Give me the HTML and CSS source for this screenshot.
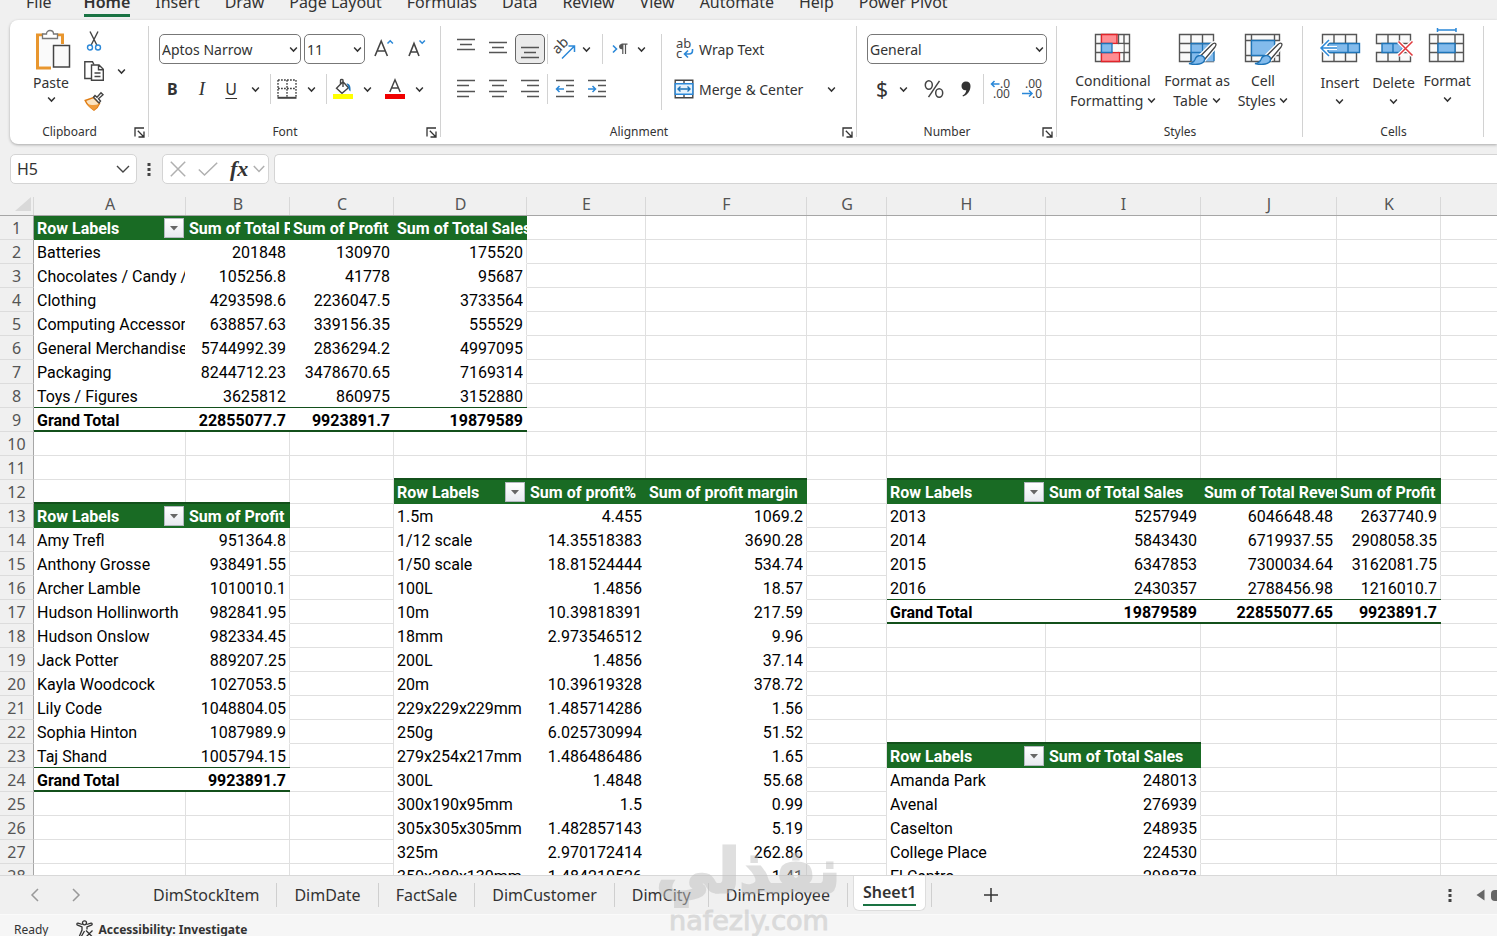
FILE: index.html
```html
<!DOCTYPE html>
<html lang="en">
<head>
    <meta charset="UTF-8">
    <meta name="viewport" content="width=device-width, initial-scale=1.0">
    <title>Workbook - Sheet1</title>
    <link rel="stylesheet" href="styles.css">
</head>
<body>
    <!-- Shared icons -->
    <svg class="icon-defs" aria-hidden="true">
        <symbol id="chevron" viewBox="0 0 8 6"><path d="M1 1.2 4 4.4 7 1.2" fill="none" stroke="currentColor" stroke-width="1.3"/></symbol>
        <symbol id="launcher" viewBox="0 0 11 11"><path d="M1 9.5V1h9M3.8 3.8l5.4 5.4M10 4.5V10H4.5" fill="none" stroke="currentColor" stroke-width="1.3"/></symbol>
        <symbol id="brush" viewBox="0 0 40 36">
            <path d="M38.500 13.500c1 1 .5 2-.5 3.500L28 29l-4-3.500L35 14.500c1.500-1.500 2.500-2 3.500-1z" fill="#fff" stroke="#fff" stroke-width="4"/>
            <path d="M38.500 13.500c1 1 .5 2-.5 3.500L28 29l-4-3.500L35 14.500c1.500-1.500 2.500-2 3.500-1z" fill="#fff" stroke="#444" stroke-width="1.300"/>
            <path d="M23.500 25.500c2.500 0 4.500 2 4 4.500-.8 4-8 5.500-15.500 3.500 3.500-.5 5-1.500 6-4 .8-2.500 2.500-4 5.500-4z" fill="#83bbec" stroke="#1e74b8" stroke-width="1.300"/>
        </symbol>
    </svg>

    <nav class="menu">
        <button>File</button>
        <button class="active">Home</button>
        <button>Insert</button>
        <button>Draw</button>
        <button>Page Layout</button>
        <button>Formulas</button>
        <button>Data</button>
        <button>Review</button>
        <button>View</button>
        <button>Automate</button>
        <button>Help</button>
        <button>Power Pivot</button>
    </nav>

    <div class="ribbon">
        <section class="group group-clipboard">
            <div class="group-body">
                <button class="big-btn split-btn">
                    <svg width="40" height="40" viewBox="0 0 40 40" fill="none">
                        <path d="M12.500 5H6.500v33H20M26 5h5.500v9" stroke="#e8962e" stroke-width="3"/>
                        <path d="M8 6.500h22V14H21v22H8z" fill="#fafafa"/>
                        <path d="M11.500 8.500V4h4c0-2 1.500-3.500 3.500-3.500s3.500 1.500 3.500 3.500h4v4.500z" fill="#fff" stroke="#777" stroke-width="1.300"/>
                        <path d="M22.500 15.500h16V37h-16z" fill="#fafafa" stroke="#444" stroke-width="1.500"/>
                    </svg>
                    <span>Paste</span>
                    <svg class="chev"><use href="#chevron"/></svg>
                </button>
                <div class="clip-list">
                    <div class="row">
                        <button class="btn" aria-label="Cut">
                            <svg width="16" height="20" viewBox="0 0 16 20" fill="none">
                                <path d="M4 .5 10.800 14M12 .5 5.200 14" stroke="#444" stroke-width="1.400"/>
                                <circle cx="4" cy="16.500" r="2.500" stroke="#2b88d8" stroke-width="1.400"/>
                                <circle cx="12" cy="16.500" r="2.500" stroke="#2b88d8" stroke-width="1.400"/>
                            </svg>
                        </button>
                    </div>
                    <div class="row">
                        <button class="btn" aria-label="Copy">
                            <svg width="20" height="20" viewBox="0 0 20 20" fill="none" stroke="#444" stroke-width="1.400">
                                <path d="M7 17.500H.8V.8h7.700L10 3.500"/>
                                <path d="M7.500 4h7.500l4.300 4.300v11H7.500zM14.500 4.300v4.400H19M10.500 12h6M10.500 15.500h6"/>
                            </svg>
                        </button>
                        <button class="caret" aria-label="Copy options"><svg class="chev"><use href="#chevron"/></svg></button>
                    </div>
                    <div class="row">
                        <button class="btn" aria-label="Format Painter">
                            <svg width="20" height="20" viewBox="0 0 20 20">
                                <path d="M1.200 9.500 9.500 6.500l6 6c-1 2.500-3 5-5.500 6.500C6 16.500 3 13.500 1.200 9.500z" fill="#fbe3c0" stroke="#e07d14" stroke-width="1.500"/>
                                <path d="M3 12.500c4 2 8 2 12 .5-1.500 3-3 4.500-5 6-3-1.500-5.500-4-7-6.500z" fill="#f09a38"/>
                                <path d="M9.500 6.300 11 4.500l2 1.800 4-4.500 2 2-4.500 4L16.500 10l-1.500 2z" fill="#fff" stroke="#444" stroke-width="1.400"/>
                            </svg>
                        </button>
                    </div>
                </div>
            </div>
            <div class="group-label"><span>Clipboard</span><button class="launch" aria-label="Clipboard settings"><svg><use href="#launcher"/></svg></button></div>
        </section>

        <section class="group group-font">
            <div class="group-body rows">
                <div class="row">
                    <div class="select font-name">
                        <select aria-label="Font"><option>Aptos Narrow</option></select>
                        <svg class="chev"><use href="#chevron"/></svg>
                    </div>
                    <div class="select font-size">
                        <select aria-label="Font size"><option>11</option></select>
                        <svg class="chev"><use href="#chevron"/></svg>
                    </div>
                    <button class="btn" aria-label="Increase font size">
                        <svg width="20" height="20" viewBox="-1 0 20 20" fill="none"><path d="M1 17 7.200 2 13.400 17M3.200 12h8" stroke="#444" stroke-width="1.600"/><path d="M13.500 4.500 16.200 1.800l2.700 2.700" stroke="#2b88d8" stroke-width="1.500"/></svg>
                    </button>
                    <button class="btn" aria-label="Decrease font size">
                        <svg width="18" height="20" viewBox="-1 0 18 20" fill="none"><path d="M1 17 6 4.500 11 17M2.800 13h6.500" stroke="#444" stroke-width="1.600"/><path d="M11.500 1.500l2.700 2.700 2.700-2.700" stroke="#2b88d8" stroke-width="1.500"/></svg>
                    </button>
                </div>
                <div class="row">
                    <button class="btn bold">B</button>
                    <button class="btn italic">I</button>
                    <div class="split">
                        <button class="btn underline">U</button>
                        <button class="caret" aria-label="Underline options"><svg class="chev"><use href="#chevron"/></svg></button>
                    </div>
                    <span class="sep"></span>
                    <div class="split">
                        <button class="btn" aria-label="Borders">
                            <svg width="20" height="20" viewBox="0 0 20 20" fill="none" stroke="#444" stroke-width="1.400"><path d="M1 1h18M1 1v17M19 1v17M10 1v17M1 9.500h18" stroke-dasharray="1.800 1.200"/><path d="M.5 18.800h19" stroke-width="2"/></svg>
                        </button>
                        <button class="caret" aria-label="Border options"><svg class="chev"><use href="#chevron"/></svg></button>
                    </div>
                    <span class="sep"></span>
                    <div class="split">
                        <button class="btn" aria-label="Fill Color">
                            <svg width="22" height="20" viewBox="0 0 22 20" fill="none"><path d="M4.500 9.200 11 2.700l5.500 6-6.500 5.500zM8.500 5V1.200c0-1 2.500-1 2.500 0V8" stroke="#444" stroke-width="1.400"/><path d="M14.500 4.500c3 0 4.500 2.500 4 8-1.800-1-2-3-2-4.500z" fill="#1e74b8"/><path d="M1 15h20v5H1z" fill="#ff0"/></svg>
                        </button>
                        <button class="caret" aria-label="Fill options"><svg class="chev"><use href="#chevron"/></svg></button>
                    </div>
                    <div class="split">
                        <button class="btn" aria-label="Font Color">
                            <svg width="20" height="20" viewBox="0 0 20 20" fill="none"><path d="M4.800 13 10 .8 15.200 13M6.500 9h7" stroke="#444" stroke-width="1.500"/><path d="M0 15h20v5H0z" fill="#f00000"/></svg>
                        </button>
                        <button class="caret" aria-label="Font color options"><svg class="chev"><use href="#chevron"/></svg></button>
                    </div>
                </div>
            </div>
            <div class="group-label"><span>Font</span><button class="launch" aria-label="Font settings"><svg><use href="#launcher"/></svg></button></div>
        </section>

        <section class="group group-align">
            <div class="group-body">
                <div class="rows compact">
                    <div class="row">
                        <button class="btn" aria-label="Top Align"><svg class="lines" viewBox="0 0 20 20"><path d="M1 .500h18M4 5.500h12M1 10.500h18"/></svg></button>
                        <button class="btn" aria-label="Middle Align"><svg class="lines" viewBox="0 0 20 20"><path d="M1 3.500h18M4 8.500h12M1 13.500h18"/></svg></button>
                        <button class="btn pressed" aria-label="Bottom Align"><svg class="lines" viewBox="0 0 20 20"><path d="M1 8.500h18M4 13.500h12M1 18.500h18"/></svg></button>
                        <span class="sep"></span>
                        <div class="split">
                            <button class="btn" aria-label="Orientation">
                                <svg width="22" height="22" viewBox="0 0 22 22"><text x="0" y="14" transform="rotate(-45 5 11)" font-size="14" fill="#444">ab</text><path d="M8 20.500 20 8.500M14.500 8h6v6" fill="none" stroke="#2b88d8" stroke-width="1.500"/></svg>
                            </button>
                            <button class="caret" aria-label="Orientation options"><svg class="chev"><use href="#chevron"/></svg></button>
                        </div>
                        <span class="sep"></span>
                        <div class="split">
                            <button class="btn" aria-label="Text Direction">
                                <svg width="16" height="12" viewBox="0 0 16 12" fill="none"><path d="M1 2.500 4.500 6 1 9.500" stroke="#2b88d8" stroke-width="1.600"/><path d="M10.800 11V1.200M13.500 11V1.200M9.500 1.200h6" stroke="#555" stroke-width="1.200"/><path d="M11 1H9.700a2.600 2.600 0 0 0 0 5.200H11z" fill="#555"/></svg>
                            </button>
                            <button class="caret" aria-label="Direction options"><svg class="chev"><use href="#chevron"/></svg></button>
                        </div>
                    </div>
                    <div class="row">
                        <button class="btn" aria-label="Align Left"><svg class="lines" viewBox="0 0 20 20"><path d="M1 1.500h18M1 6.500h12M1 12.500h18M1 17.500h12"/></svg></button>
                        <button class="btn" aria-label="Center"><svg class="lines" viewBox="0 0 20 20"><path d="M1 1.500h18M4 6.500h12M1 12.500h18M4 17.500h12"/></svg></button>
                        <button class="btn" aria-label="Align Right"><svg class="lines" viewBox="0 0 20 20"><path d="M1 1.500h18M7 6.500h12M1 12.500h18M7 17.500h12"/></svg></button>
                        <span class="sep"></span>
                        <button class="btn" aria-label="Decrease Indent"><svg class="lines" viewBox="0 0 20 20"><path d="M1 1.500h18M11 6.500h8M11 12.500h8M1 17.500h18"/><path class="blue" d="M9 10H1.500M4.500 7l-3 3 3 3"/></svg></button>
                        <button class="btn" aria-label="Increase Indent"><svg class="lines" viewBox="0 0 20 20"><path d="M1 1.500h18M11 6.500h8M11 12.500h8M1 17.500h18"/><path class="blue" d="M1 10h7.500M5.500 7l3 3-3 3"/></svg></button>
                    </div>
                </div>
                <span class="sep tall"></span>
                <div class="rows text-rows">
                    <button class="text-btn">
                        <svg width="20" height="20" viewBox="0 0 20 20"><text x="2" y="9" font-size="13" fill="#444">ab</text><text x="2" y="19" font-size="13" fill="#444">c</text><path d="M18.500 10v1.500c0 2.500-1 3.500-3.500 3.500h-4.500M14 11.500 10.500 15l3.500 3.500" fill="none" stroke="#2b88d8" stroke-width="1.600"/></svg>
                        <span>Wrap Text</span>
                    </button>
                    <button class="text-btn">
                        <svg width="20" height="20" viewBox="0 0 20 20" fill="none"><path d="M1.200 1.200h17.600v17.600H1.200zM10 1v4M10 15v4" stroke="#444" stroke-width="1.400"/><path d="M1.200 4.800h17.600v10.400H1.200z" fill="#e6f2fb" stroke="#2b88d8" stroke-width="1.400"/><path d="M4 10h12M6.500 7.500 4 10l2.500 2.500M13.500 7.500 16 10l-2.500 2.500" stroke="#1e74b8" stroke-width="1.400"/></svg>
                        <span>Merge &amp; Center</span>
                        <svg class="chev"><use href="#chevron"/></svg>
                    </button>
                </div>
            </div>
            <div class="group-label"><span>Alignment</span><button class="launch" aria-label="Alignment settings"><svg><use href="#launcher"/></svg></button></div>
        </section>

        <section class="group group-number">
            <div class="group-body rows compact">
                <div class="select">
                    <select aria-label="Number format"><option>General</option></select>
                    <svg class="chev"><use href="#chevron"/></svg>
                </div>
                <div class="row">
                    <div class="split">
                        <button class="btn symbol">$</button>
                        <button class="caret" aria-label="Accounting options"><svg class="chev"><use href="#chevron"/></svg></button>
                    </div>
                    <button class="btn" aria-label="Percent Style">
                        <svg width="20" height="18" viewBox="0 0 20 18" fill="none" stroke="#444" stroke-width="1.500"><path d="M15.500.8 4.500 17.200"/><ellipse cx="4.800" cy="5" rx="3.500" ry="4.200"/><ellipse cx="15.200" cy="13" rx="3.500" ry="4.200"/></svg>
                    </button>
                    <button class="btn" aria-label="Comma Style"><svg width="10" height="16" viewBox="0 0 10 16"><path d="M9.500 5c0 5-3 9-7.500 10.500l-.5-1C4 13 5 11.500 5.300 9.200 2.500 9.800.5 7.800.5 5A4.300 4.300 0 0 1 5 .5C8 .5 9.500 2.500 9.500 5z" fill="#333"/></svg></button>
                    <span class="sep"></span>
                    <button class="btn" aria-label="Increase Decimal">
                        <svg width="20" height="22" viewBox="0 0 20 22"><g font-size="12" fill="#444"><text x="10" y="10">.0</text><text x="3" y="20">.00</text></g><path d="M9.500 6h-8M4.500 3l-3 3 3 3" fill="none" stroke="#2b88d8" stroke-width="1.500"/></svg>
                    </button>
                    <button class="btn" aria-label="Decrease Decimal">
                        <svg width="20" height="22" viewBox="0 0 20 22"><g font-size="12" fill="#444"><text x="3" y="10">.00</text><text x="10" y="20">.0</text></g><path d="M0 15.500h10M7 12.500l3 3-3 3" fill="none" stroke="#2b88d8" stroke-width="1.500"/></svg>
                    </button>
                </div>
            </div>
            <div class="group-label"><span>Number</span><button class="launch" aria-label="Number settings"><svg><use href="#launcher"/></svg></button></div>
        </section>

        <section class="group group-styles">
            <div class="group-body">
                <button class="big-btn">
                    <svg class="big" viewBox="0 0 40 36">
                        <path class="grid" d="M2.500 4.500h34v27h-34zM8.500 4.500v27M25.500 4.500v27M31 4.500v27M2.500 13.500h34M2.500 22.500h34"/>
                        <path d="M8.500 4.500h15.500v9H8.500zM8.500 22.500h18v9h-18z" fill="#ff8d92" stroke="#e0252b" stroke-width="1.300"/>
                        <path d="M19.500 14.200h11v7.600h-11z" fill="#fafafa"/>
                        <path d="M8.500 13.500H19v9H8.500z" fill="#83bbec" stroke="#1e74b8" stroke-width="1.300"/>
                    </svg>
                    <span>Conditional<br>Formatting <svg class="chev"><use href="#chevron"/></svg></span>
                </button>
                <button class="big-btn">
                    <svg class="big" viewBox="0 0 40 36">
                        <path class="grid" d="M2.500 4.500h34v27h-34z"/>
                        <path d="M14 13h23v18.500H14z" fill="#83bbec"/>
                        <path class="grid" d="M14 4.500v9M25.500 4.500v9M14 22v9.500M2.500 13.500h34M2.500 22.500H14" fill-opacity="0"/>
                        <path d="M14 31V13.500h23V31M25.500 13.500v18M14 22.500h23" fill="none" stroke="#1e74b8" stroke-width="1.300"/>
                        <use href="#brush"/>
                    </svg>
                    <span>Format as<br>Table <svg class="chev"><use href="#chevron"/></svg></span>
                </button>
                <button class="big-btn">
                    <svg class="big" viewBox="0 0 40 36">
                        <path class="grid" d="M2.500 4.500h34v27h-34zM8.500 4.500v27M31.500 4.500v27M2.500 10.500h34M2.500 25.500h34"/>
                        <path d="M8.500 10.500h23v15h-23z" fill="#83bbec" stroke="#1e74b8" stroke-width="1.300"/>
                        <use href="#brush"/>
                    </svg>
                    <span>Cell<br>Styles <svg class="chev"><use href="#chevron"/></svg></span>
                </button>
            </div>
            <div class="group-label"><span>Styles</span></div>
        </section>

        <section class="group group-cells">
            <div class="group-body">
                <button class="big-btn split-btn">
                    <svg class="big" viewBox="0 0 40 36">
                        <path class="grid" d="M2.500 4.500h34v27h-34zM14 4.500v27M25.500 4.500v27M2.500 13.500h34M2.500 22.500h34"/>
                        <path d="M8 13.500h31.500v9H8z" fill="#83bbec" stroke="#1e74b8" stroke-width="1.400"/>
                        <path d="M28 13.500v9" stroke="#1e74b8" stroke-width="1.400"/>
                        <path d="M17 18H1M9 10 1 18l8 8" fill="none" stroke="#fff" stroke-width="4"/>
                        <path d="M17 18H1M9 10 1 18l8 8" fill="none" stroke="#2b88d8" stroke-width="1.500"/>
                    </svg>
                    <span>Insert</span>
                    <svg class="chev"><use href="#chevron"/></svg>
                </button>
                <button class="big-btn split-btn">
                    <svg class="big" viewBox="0 0 40 36">
                        <path class="grid" d="M2.500 13.500v-9h34v9zM2.500 22.500v9h34v-9zM14 4.500v9M25.500 4.500v9M14 22.500v9M25.500 22.500v9"/>
                        <path d="M8 13.500h17l4 4.500-4 4.500H8zM19 13.500v9" fill="#83bbec" stroke="#1e74b8" stroke-width="1.400"/>
                        <path d="M24.500 11.500l14 14M38.500 11.500l-14 14" stroke="#fff" stroke-width="4"/>
                        <path d="M24.500 11.500l14 14M38.500 11.500l-14 14" stroke="#e0393e" stroke-width="1.500"/>
                    </svg>
                    <span>Delete</span>
                    <svg class="chev"><use href="#chevron"/></svg>
                </button>
                <button class="big-btn">
                    <svg class="big" viewBox="0 0 40 36">
                        <path class="grid" d="M2.500 4.500h34v27h-34zM11 4.500v27M28 4.500v27M2.500 13.500h34M2.500 22.500h34"/>
                        <path d="M11 13.500h17v9H11z" fill="#83bbec" stroke="#1e74b8" stroke-width="1.400"/>
                        <path d="M10.500-2v4M29-2v4M10.500 0H29" stroke="#2b88d8" stroke-width="1.500"/>
                    </svg>
                    <span>Format</span>
                    <svg class="chev"><use href="#chevron"/></svg>
                </button>
            </div>
            <div class="group-label"><span>Cells</span></div>
        </section>
    </div>

    <div class="formula-bar">
        <div class="name-box">
            <input type="text" value="H5" aria-label="Name Box">
            <svg width="14" height="8" viewBox="0 0 14 8" fill="none" stroke="#444" stroke-width="1.400"><path d="M1 1l6 6 6-6"/></svg>
        </div>
        <svg class="dots" viewBox="0 0 4 14"><path d="M.5 1h3v3h-3zM.5 6h3v3h-3zM.5 11h3v3h-3z"/></svg>
        <div class="fx-box">
            <button aria-label="Cancel"><svg width="16" height="16" viewBox="0 0 16 16"><path d="M.8.8l14.400 14.400M15.200.8.8 15.200"/></svg></button>
            <button aria-label="Enter"><svg width="20" height="14" viewBox="0 0 20 14"><path d="M.8 7.500 6.500 13 19.200.8"/></svg></button>
            <button class="fx">fx</button>
            <button class="fx-more" aria-label="Function options"><svg width="12" height="8" viewBox="0 0 12 8"><path d="M.8 1 6 6.500 11.200 1"/></svg></button>
        </div>
        <input class="formula" type="text" aria-label="Formula">
    </div>

    <main class="sheet">
        <table>
            <colgroup id="cols"></colgroup>
            <thead><tr id="colHeads"></tr></thead>
            <tbody id="cells"></tbody>
        </table>
    </main>

    <div class="sheet-bar">
        <div class="sheet-nav">
            <button aria-label="Previous sheet"><svg width="8" height="14" viewBox="0 0 8 14"><path d="M7 1 1 7l6 6"/></svg></button>
            <button aria-label="Next sheet"><svg width="8" height="14" viewBox="0 0 8 14"><path d="M1 1l6 6-6 6"/></svg></button>
        </div>
        <div class="sheet-tabs">
            <button>DimStockItem</button>
            <button>DimDate</button>
            <button>FactSale</button>
            <button>DimCustomer</button>
            <button>DimCity</button>
            <button>DimEmployee</button>
            <button class="current"><span>Sheet1</span></button>
        </div>
        <button class="add-sheet" aria-label="New sheet"><svg width="14" height="14" viewBox="0 0 14 14"><path d="M7 0v14M0 7h14"/></svg></button>
        <svg class="dots" viewBox="0 0 4 14"><path d="M.5 1h3v3h-3zM.5 6h3v3h-3zM.5 11h3v3h-3z"/></svg>
        <div class="scroll">
            <svg width="9" height="12" viewBox="0 0 9 12"><path d="M8.500.5v11L.5 6z"/></svg>
            <span class="thumb"></span>
        </div>
    </div>

    <footer class="status">
        <span>Ready</span>
        <svg width="18" height="18" viewBox="0 0 18 18" fill="none" stroke="#333" stroke-width="1.300">
            <circle cx="8.500" cy="2.800" r="2"/>
            <path d="M6.500 4.500 2 3.200c-1.200-.3-1.600 1.500-.4 2L6 7v3L3.500 16c-.4 1.200 1.200 1.700 1.700.7L8.500 11M10.500 4.500 15 3.200c1.200-.3 1.600 1.500.4 2L11 7v2.500M10 10.500l6.500 6.500M16.500 10.500 10 17"/>
        </svg>
        <strong>Accessibility: Investigate</strong>
    </footer>

    <div class="watermark" aria-hidden="true">
        <span class="mark-ar" lang="ar" dir="rtl">نفذلي</span>
        <span class="mark-en">nafezly.com</span>
    </div>

    <script>
        const columns = [
            ['A', 152], ['B', 104], ['C', 104], ['D', 133], ['E', 119], ['F', 161],
            ['G', 80], ['H', 159], ['I', 155], ['J', 136], ['K', 104], ['', 0]
        ];
        const rowCount = 28;

        // Each pivot starts at a column index and a row number
        const pivots = [
            {
                col: 0, row: 1, total: true,
                data: [
                    ['Row Labels', 'Sum of Total Revenue', 'Sum of Profit', 'Sum of Total Sales'],
                    ['Batteries', '201848', '130970', '175520'],
                    ['Chocolates / Candy / Snacks', '105256.8', '41778', '95687'],
                    ['Clothing', '4293598.6', '2236047.5', '3733564'],
                    ['Computing Accessories', '638857.63', '339156.35', '555529'],
                    ['General Merchandise', '5744992.39', '2836294.2', '4997095'],
                    ['Packaging', '8244712.23', '3478670.65', '7169314'],
                    ['Toys / Figures', '3625812', '860975', '3152880'],
                    ['Grand Total', '22855077.7', '9923891.7', '19879589']
                ]
            },
            {
                col: 0, row: 13, total: true,
                data: [
                    ['Row Labels', 'Sum of Profit'],
                    ['Amy Trefl', '951364.8'],
                    ['Anthony Grosse', '938491.55'],
                    ['Archer Lamble', '1010010.1'],
                    ['Hudson Hollinworth', '982841.95'],
                    ['Hudson Onslow', '982334.45'],
                    ['Jack Potter', '889207.25'],
                    ['Kayla Woodcock', '1027053.5'],
                    ['Lily Code', '1048804.05'],
                    ['Sophia Hinton', '1087989.9'],
                    ['Taj Shand', '1005794.15'],
                    ['Grand Total', '9923891.7']
                ]
            },
            {
                col: 3, row: 12,
                data: [
                    ['Row Labels', 'Sum of profit%', 'Sum of profit margin'],
                    ['1.5m', '4.455', '1069.2'],
                    ['1/12 scale', '14.35518383', '3690.28'],
                    ['1/50 scale', '18.81524444', '534.74'],
                    ['100L', '1.4856', '18.57'],
                    ['10m', '10.39818391', '217.59'],
                    ['18mm', '2.973546512', '9.96'],
                    ['200L', '1.4856', '37.14'],
                    ['20m', '10.39619328', '378.72'],
                    ['229x229x229mm', '1.485714286', '1.56'],
                    ['250g', '6.025730994', '51.52'],
                    ['279x254x217mm', '1.486486486', '1.65'],
                    ['300L', '1.4848', '55.68'],
                    ['300x190x95mm', '1.5', '0.99'],
                    ['305x305x305mm', '1.482857143', '5.19'],
                    ['325m', '2.970172414', '262.86'],
                    ['350x280x130mm', '1.484210526', '1.41']
                ]
            },
            {
                col: 7, row: 12, total: true,
                data: [
                    ['Row Labels', 'Sum of Total Sales', 'Sum of Total Revenue', 'Sum of Profit'],
                    ['2013', '5257949', '6046648.48', '2637740.9'],
                    ['2014', '5843430', '6719937.55', '2908058.35'],
                    ['2015', '6347853', '7300034.64', '3162081.75'],
                    ['2016', '2430357', '2788456.98', '1216010.7'],
                    ['Grand Total', '19879589', '22855077.65', '9923891.7']
                ]
            },
            {
                col: 7, row: 23,
                data: [
                    ['Row Labels', 'Sum of Total Sales'],
                    ['Amanda Park', '248013'],
                    ['Avenal', '276939'],
                    ['Caselton', '248935'],
                    ['College Place', '224530'],
                    ['El Centro', '298878']
                ]
            }
        ];

        function renderCell(row, col) {
            for (const p of pivots) {
                const r = row - p.row;
                const c = col - p.col;
                if (r < 0 || c < 0 || r >= p.data.length || c >= p.data[0].length) continue;

                const text = p.data[r][c];
                const names = ['pivot'];
                if (r === 0) names.push('head');
                else if (p.total && r === p.data.length - 1) names.push('total');
                if (r > 0 && c > 0) names.push('num');
                if (c === p.data[0].length - 1) names.push('last');
                const filter = r === 0 && c === 0
                    ? '<button class="filter" aria-label="Filter"><svg width="8" height="5" viewBox="0 0 8 5"><path d="M0 0h8L4 4.500z"/></svg></button>'
                    : '';
                return `<td class="${names.join(' ')}"><div class="cell"><span>${text}</span>${filter}</div></td>`;
            }
            return '<td></td>';
        }

        document.getElementById('cols').innerHTML = '<col class="row-col">' +
            columns.map(([, w]) => w ? `<col style="width: ${w}px">` : '<col>').join('');

        document.getElementById('colHeads').innerHTML =
            '<th class="corner"><svg width="16" height="14" viewBox="0 0 16 14"><path d="M16 0v14H0z"/></svg></th>' +
            columns.map(([name]) => `<th>${name}</th>`).join('');

        let html = '';
        for (let row = 1; row <= rowCount; row++) {
            html += `<tr><th>${row}</th>${columns.map((_, col) => renderCell(row, col)).join('')}</tr>`;
        }
        document.getElementById('cells').innerHTML = html;
    </script>
</body>
</html>
```
FILE: styles.css
```css
* {
    margin: 0;
    padding: 0;
    box-sizing: border-box;
}

body {
    font-family: 'Noto Sans', 'Open Sans', sans-serif;
    font-size: 14px;
    background: #f0f0f0;
    color: #333;
    height: 100vh;
    display: flex;
    flex-direction: column;
    overflow: hidden;
}

button,
input,
select {
    font: inherit;
    color: inherit;
    background: none;
    border: none;
    outline: none;
}

svg {
    flex: none;
    overflow: visible;
}

.icon-defs {
    position: absolute;
    width: 0;
    height: 0;
}

.chev {
    width: 9px;
    height: 7px;
}

.dots {
    width: 4px;
    height: 14px;
    fill: #444;
}

/* Menu */
.menu {
    display: flex;
    flex: none;
    align-items: flex-end;
    gap: 25px;
    height: 20px;
    padding: 0 26px 3px;
    overflow: hidden;
}

.menu button {
    flex: none;
    font-size: 16px;
    line-height: 22px;
    padding-bottom: 1px;
    border-bottom: 3px solid transparent;
    white-space: nowrap;
}

.menu button:first-child {
    margin-right: 7px;
}

.menu .active {
    font-weight: 600;
    border-bottom-color: #1a7343;
}

/* Ribbon */
.ribbon {
    display: flex;
    flex: none;
    height: 124px;
    margin-left: 10px;
    background: #fff;
    border-radius: 8px 0 0 8px;
    box-shadow: 0 1px 3px rgba(0, 0, 0, 0.3);
}

.group {
    position: relative;
    display: flex;
    flex: none;
    flex-direction: column;
    padding-bottom: 4px;
}

.group::after {
    content: '';
    position: absolute;
    top: 6px;
    right: 0;
    bottom: 7px;
    width: 1px;
    background: #d2d2d2;
}

.group-clipboard { width: 139px; }
.group-font { width: 292px; }
.group-align { width: 416px; }
.group-number { width: 200px; }
.group-styles { width: 246px; }
.group-cells { width: 181px; }

.group-body {
    display: flex;
    flex: 1;
    padding: 14px 10px 0;
}

.group-clipboard .group-body,
.group-styles .group-body,
.group-cells .group-body {
    padding-top: 10px;
}

.group-label {
    display: flex;
    font-size: 12px;
    line-height: 16px;
}

.group-label span {
    flex: 1;
    text-align: center;
}

.launch {
    display: flex;
    align-items: center;
    justify-content: center;
    width: 20px;
}

.launch svg {
    width: 11px;
    height: 11px;
}

.rows {
    display: flex;
    flex-direction: column;
    gap: 10px;
}

.row {
    display: flex;
    gap: 3px;
}

.compact .row {
    gap: 2px;
}

.btn,
.caret {
    display: flex;
    align-items: center;
    justify-content: center;
    width: 30px;
    height: 30px;
}

.caret,
.group-font .split .btn {
    width: 24px;
}

.group-font .split {
    padding-left: 1px;
}

.compact .caret {
    width: 20px;
    padding-right: 7px;
}

.split {
    display: flex;
}

.bold {
    font-size: 16px;
    font-weight: 700;
}

.italic {
    font-family: 'Liberation Serif', serif;
    font-size: 19px;
    font-style: italic;
}

.underline {
    font-size: 16px;
    text-decoration: underline;
    text-underline-offset: 3px;
    text-decoration-thickness: 1px;
}

.symbol {
    font-size: 21px;
}

.pressed {
    background: #ebebeb;
    border: 1px solid #666;
    border-radius: 5px;
}

.sep {
    width: 1px;
    height: 30px;
    background: #d2d2d2;
}

.sep.tall {
    height: 76px;
    margin: 0 12px 0 6px;
}

.lines {
    width: 20px;
    height: 20px;
    fill: none;
    stroke: #555;
    stroke-width: 1.5;
}

.lines .blue {
    stroke: #2b88d8;
}

.clip-list {
    display: flex;
    flex-direction: column;
    margin-top: -4px;
}

.clip-list .btn {
    width: 24px;
}

.big-btn {
    display: flex;
    flex-direction: column;
    align-items: center;
    gap: 5px;
    line-height: 20px;
    white-space: nowrap;
}

.big-btn.split-btn {
    gap: 7px;
}

.group-cells .split-btn .chev {
    margin-top: -2px;
}

.big-btn span .chev {
    vertical-align: 2px;
}

.big {
    width: 40px;
    height: 36px;
}

.big .grid {
    fill: #fafafa;
    stroke: #555;
    stroke-width: 1.4;
}

.group-clipboard .big-btn {
    width: 62px;
    gap: 3px;
}

.group-styles .big-btn:nth-child(1) { width: 92px; }
.group-styles .big-btn:nth-child(2) { width: 76px; }
.group-styles .big-btn:nth-child(3) { width: 56px; }
.group-cells .big-btn { width: 54px; }

.text-btn {
    display: flex;
    align-items: center;
    gap: 5px;
    width: 162px;
    height: 30px;
}

.text-btn .chev {
    margin-left: auto;
}

.select {
    position: relative;
    height: 30px;
}

.select select {
    appearance: none;
    width: 100%;
    height: 100%;
    padding: 0 2px;
    border: 1px solid #777;
    border-radius: 5px;
}

.select .chev {
    position: absolute;
    top: 12px;
    right: 3px;
    pointer-events: none;
}

.font-name { width: 143px; }
.font-size { width: 62px; }

/* Formula bar */
.formula-bar {
    display: flex;
    flex: none;
    align-items: center;
    padding: 10px 0 6px 10px;
}

.name-box,
.fx-box,
.formula {
    height: 30px;
    background: #fff;
    border: 1px solid #d4d4d4;
    border-radius: 5px;
}

.name-box {
    display: flex;
    align-items: center;
    width: 127px;
    padding: 0 6px;
    font-size: 16px;
}

.name-box input {
    flex: 1;
    min-width: 0;
}

.formula-bar .dots {
    margin: 0 11px 0 10px;
}

.fx-box {
    display: flex;
    align-items: center;
    gap: 12px;
    width: 107px;
    padding: 0 2px 0 7px;
}

.fx-box button {
    display: flex;
}

.fx-box svg {
    fill: none;
    stroke: #b0b0b0;
    stroke-width: 1.5;
}

.fx-box .fx {
    font-family: 'Liberation Serif', serif;
    font-size: 22px;
    font-style: italic;
    font-weight: 700;
    line-height: 26px;
}

.fx-box .fx-more {
    margin-left: -7px;
}

.formula {
    flex: 1;
    min-width: 0;
    margin-left: 5px;
    padding: 0 8px;
    border-right: none;
    border-radius: 5px 0 0 5px;
}

/* Sheet */
.sheet {
    flex: 1;
    min-height: 0;
    overflow: hidden;
    background: #fff;
    border-bottom: 1px solid #d8d8d8;
}

table {
    width: 100%;
    table-layout: fixed;
    border-collapse: separate;
    border-spacing: 0;
}

.row-col {
    width: 34px;
}

th {
    background: #f0f0f0;
    color: #555;
    font-size: 16px;
    font-weight: 400;
    line-height: 22px;
}

thead th {
    position: relative;
    z-index: 1;
    height: 26px;
    padding-top: 3px;
    border-bottom: 1px solid #a6a6a6;
}

thead th:not(:last-child)::after {
    content: '';
    position: absolute;
    top: 7px;
    right: 0;
    bottom: 0;
    width: 1px;
    background: #d8d8d8;
}

thead .corner {
    text-align: right;
    padding: 4px 3px 0 0;
    line-height: 14px;
}

.corner svg {
    fill: #d9d9d9;
}

tbody th {
    height: 24px;
    padding-top: 1px;
    border-right: 1px solid #a6a6a6;
    border-bottom: 1px solid #dcdcdc;
}

td {
    height: 24px;
    color: #000;
    vertical-align: top;
    border-right: 1px solid #e0e0e0;
    border-bottom: 1px solid #e0e0e0;
}

td:last-child {
    border-right: none;
}

.pivot {
    border-color: transparent;
}

.pivot.last {
    border-right-color: #e0e0e0;
}

.cell {
    display: flex;
    height: 23px;
    padding: 1px 0 0 3px;
    overflow: hidden;
    font-family: Roboto, sans-serif;
    font-size: 16px;
    line-height: 24px;
    white-space: nowrap;
}

.cell span {
    flex: 1;
    min-width: 0;
    overflow: hidden;
}

.num .cell {
    padding-right: 3px;
    text-align: right;
}

.head,
.total {
    font-weight: 700;
    border-width: 0;
}

.head {
    background: #196b24;
    color: #fff;
    box-shadow: 0 -2px 0 #13501b;
}

.total {
    box-shadow: 0 -1px 0 #13501b, inset 0 -2px 0 #13501b;
}

.num.total .cell {
    padding-right: 4px;
}

.filter {
    display: flex;
    flex: none;
    align-items: center;
    justify-content: center;
    width: 20px;
    height: 20px;
    margin: 1px 2px 0 0;
    background: linear-gradient(#fff, #e8eaf0);
    border: 1px solid #b4b8c0;
}

.filter svg {
    fill: #666;
}

/* Sheet tabs */
.sheet-bar {
    display: flex;
    flex: none;
    align-items: center;
    height: 39px;
    border-bottom: 1px solid #fafafa;
}

.sheet-nav {
    display: flex;
    gap: 33px;
    width: 136px;
    padding-left: 31px;
}

.sheet-nav button {
    display: flex;
}

.sheet-nav svg,
.add-sheet svg {
    fill: none;
    stroke: #999;
    stroke-width: 1.5;
}

.sheet-tabs {
    display: flex;
    align-items: center;
    height: 100%;
}

.sheet-tabs button {
    height: 24px;
    padding: 0 17px;
    font-size: 16px;
    line-height: 24px;
    border-right: 1px solid #cfcfcf;
}

.sheet-tabs .current {
    align-self: flex-start;
    height: 35px;
    margin: 0 5px;
    padding: 0 9px;
    background: #fff;
    border: 1px solid #ddd;
    border-top: none;
    border-radius: 0 0 6px 6px;
    font-weight: 600;
}

.current span {
    display: block;
    border-bottom: 2px solid #1a7343;
}

.add-sheet {
    display: flex;
    align-items: center;
    height: 24px;
    padding-left: 52px;
    border-left: 1px solid #cfcfcf;
}

.add-sheet svg {
    stroke: #333;
}

.sheet-bar .dots {
    margin-left: auto;
}

.scroll {
    display: flex;
    align-items: center;
    gap: 6px;
    padding-left: 24px;
    fill: #666;
}

.thumb {
    width: 6px;
    height: 11px;
    background: #666;
    border-radius: 4px 0 0 4px;
}

/* Status bar */
.status {
    display: flex;
    flex: none;
    height: 21px;
    padding-left: 14px;
    overflow: hidden;
    background: #f6f6f6;
    font-size: 12px;
    line-height: 30px;
}

.status svg {
    margin: 5px 4px 0 28px;
}

/* Watermark over the lower part of the window */
.watermark {
    position: absolute;
    left: 658px;
    bottom: 0;
    width: 182px;
    color: #c0c0c0;
    text-align: center;
    opacity: 0.5;
    pointer-events: none;
}

.watermark span {
    display: block;
    font-family: 'DejaVu Sans', sans-serif;
}

.mark-ar {
    font-size: 60px;
    font-weight: 700;
    line-height: 70px;
    -webkit-text-stroke: 3px #c0c0c0;
}

.mark-en {
    font-size: 27px;
    line-height: 30px;
    -webkit-text-stroke: 1px #c0c0c0;
}
```
